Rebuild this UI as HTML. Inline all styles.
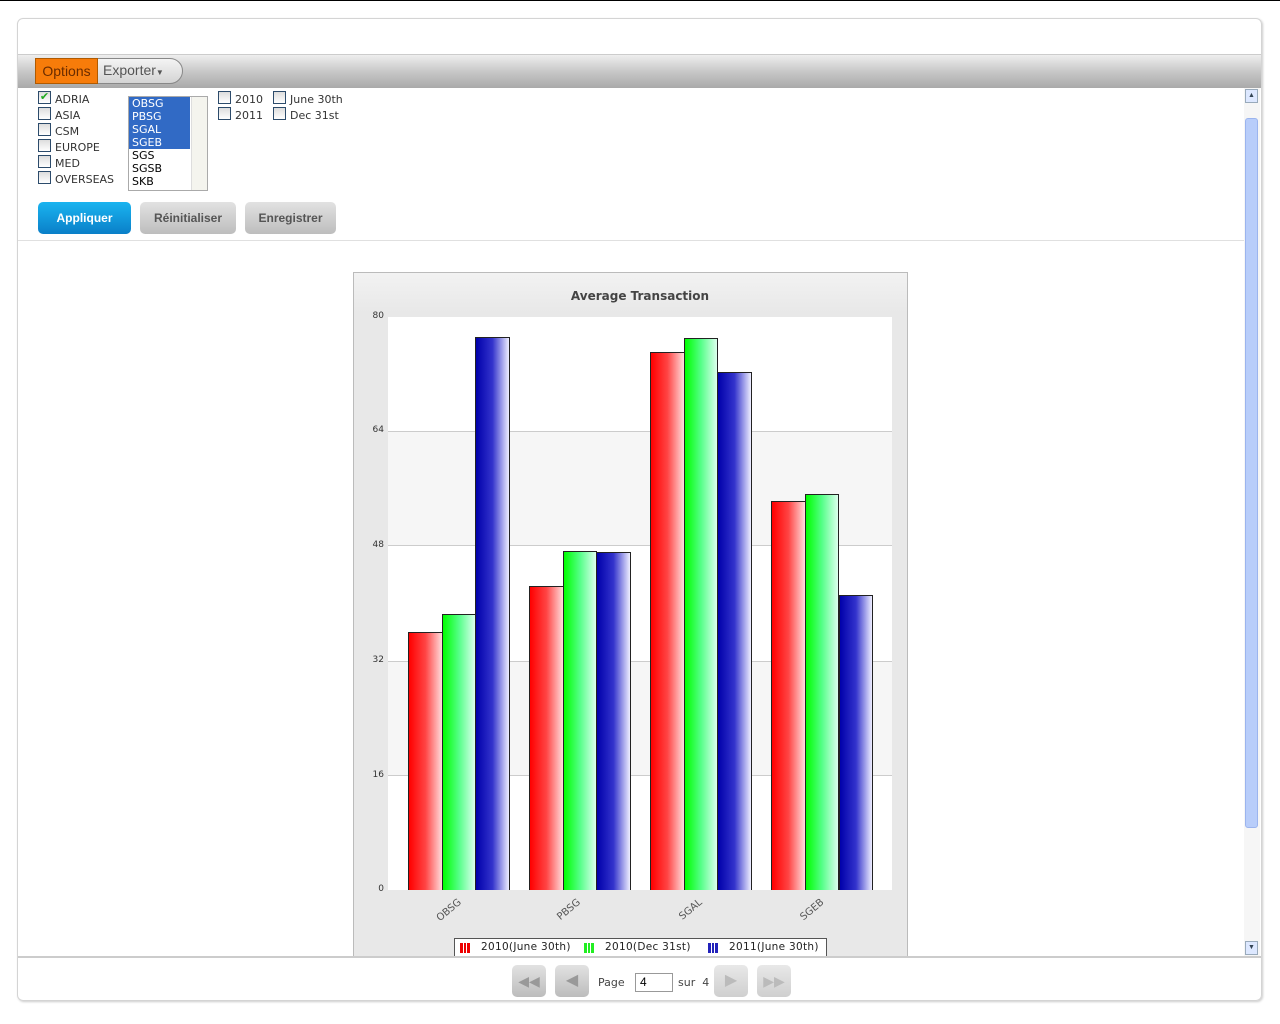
<!DOCTYPE html>
<html><head><style>
*{box-sizing:border-box}
body{margin:0;width:1280px;height:1024px;background:#fff;font-family:"Liberation Sans",sans-serif;position:relative;overflow:hidden}
.abs{position:absolute}
.frame{left:17px;top:18px;width:1245px;height:983px;border:1px solid #d4d4d4;border-radius:6px;box-shadow:1px 1px 2px #ccc}
.tb{left:18px;top:54px;width:1243px;height:34px;background:linear-gradient(#eee,#c8c8c8 50%,#a9a9a9);border-top:1px solid #ccc}
.cb{width:13px;height:13px;border:1px solid #2c4b6b;background:linear-gradient(#ddd,#fff)}
.lbl{font-family:"DejaVu Sans",sans-serif;font-size:11px;color:#333}
.btn{height:32px;border-radius:5px;font-size:12px;font-weight:bold;text-align:center;line-height:32px}
.g{background:linear-gradient(#e2e2e2,#bdbdbd);color:#555}
.bar{position:absolute;border:1px solid #222;border-bottom:none}
.r{background:linear-gradient(90deg,#f00,#f44 50%,#fdd)}
.gr{background:linear-gradient(90deg,#0f0,#5f8 50%,#dfe)}
.b{background:linear-gradient(90deg,#00a,#33c 50%,#eef)}
.yt{font-family:"DejaVu Sans",sans-serif;font-size:9px;color:#333;width:30px;text-align:right;left:354px}
.xt{font-family:"DejaVu Sans",sans-serif;font-size:9px;color:#555;transform:rotate(-40deg);transform-origin:right top}
.pb{width:34px;height:32px;border-radius:5px;background:linear-gradient(#e2e2e2,#bcbcbc);top:965px}
</style></head><body>
<div class="abs" style="left:0;top:0;width:1280px;height:1px;background:#000"></div>
<div class="abs frame"></div>
<div class="abs tb"></div>
<div class="abs" style="left:35px;top:58px;width:148px;height:26px;border:1px solid #888;border-radius:0 13px 13px 0;background:linear-gradient(#f4f4f4,#d4d4d4)"></div>
<div class="abs" style="left:35px;top:58px;width:63px;height:26px;background:#f77c0a;border:1px solid #b05a00;color:#6a2c00;font-size:14px;line-height:24px;text-align:center">Options</div>
<div class="abs" style="left:103px;top:62px;font-size:14px;color:#555">Exporter<span style="font-size:8px">▼</span></div>

<div class="abs cb" style="left:38px;top:91px;color:#2a2;font-size:11px;line-height:10px;text-align:center">✔</div>
<div class="abs cb" style="left:38px;top:107px"></div>
<div class="abs cb" style="left:38px;top:123px"></div>
<div class="abs cb" style="left:38px;top:139px"></div>
<div class="abs cb" style="left:38px;top:155px"></div>
<div class="abs cb" style="left:38px;top:171px"></div>
<div class="abs lbl" style="left:55px;top:92px;line-height:16px">ADRIA<br>ASIA<br>CSM<br>EUROPE<br>MED<br>OVERSEAS</div>

<div class="abs" style="left:128px;top:96px;width:80px;height:95px;border:1px solid #aaa;background:#fff"></div>
<div class="abs" style="left:129px;top:97px;width:61px;height:52px;background:#316ac5"></div>
<div class="abs" style="left:132px;top:97px;font-family:'DejaVu Sans',sans-serif;font-size:11px;line-height:13px;color:#000"><span style="color:#fff">OBSG<br>PBSG<br>SGAL<br>SGEB</span><br>SGS<br>SGSB<br>SKB</div>
<div class="abs" style="left:191px;top:97px;width:16px;height:93px;background:#f4f4ee;border-left:1px solid #ddd"></div>

<div class="abs cb" style="left:218px;top:91px"></div>
<div class="abs cb" style="left:218px;top:107px"></div>
<div class="abs cb" style="left:273px;top:91px"></div>
<div class="abs cb" style="left:273px;top:107px"></div>
<div class="abs lbl" style="left:235px;top:92px;line-height:16px">2010<br>2011</div>
<div class="abs lbl" style="left:290px;top:92px;line-height:16px">June 30th<br>Dec 31st</div>

<div class="abs btn" style="left:38px;top:202px;width:93px;background:linear-gradient(#1ab4f0,#0a7fc8);color:#fff">Appliquer</div>
<div class="abs btn g" style="left:140px;top:202px;width:96px">Réinitialiser</div>
<div class="abs btn g" style="left:245px;top:202px;width:91px">Enregistrer</div>
<div class="abs" style="left:18px;top:240px;width:1226px;height:1px;background:#e0e0e0"></div>

<div class="abs" style="left:1244px;top:88px;width:16px;height:868px;background:#f6f6f6"></div>
<div class="abs" style="left:1245px;top:89px;width:13px;height:14px;background:#dde8ff;border:1px solid #9ab;font-size:7px;line-height:12px;text-align:center;color:#345">▲</div>
<div class="abs" style="left:1245px;top:941px;width:13px;height:14px;background:#dde8ff;border:1px solid #9ab;font-size:7px;line-height:12px;text-align:center;color:#345">▼</div>
<div class="abs" style="left:1245px;top:118px;width:13px;height:710px;background:#b8cdfa;border:1px solid #9bb4ee;border-radius:3px"></div>

<div class="abs" style="left:353px;top:272px;width:555px;height:685px;background:#e8e8e8;border:1px solid #bbb;border-bottom:none"></div>
<div class="abs" style="left:354px;top:273px;width:553px;height:40px;background:linear-gradient(#f2f2f2,#e8e8e8)"></div>
<div class="abs" style="left:354px;top:289px;width:572px;text-align:center;font-family:'DejaVu Sans',sans-serif;font-size:12px;font-weight:bold;color:#444">Average Transaction</div>
<div class="abs" style="left:388px;top:317px;width:504px;height:573px;background:#fff"></div>
<div class="abs" style="left:388px;top:431px;width:504px;height:115px;background:#f6f6f6;border-top:1px solid #ccc;border-bottom:1px solid #ccc"></div>
<div class="abs" style="left:388px;top:661px;width:504px;height:115px;background:#f6f6f6;border-top:1px solid #ccc;border-bottom:1px solid #ccc"></div>
<div class="abs yt" style="top:311px">80</div>
<div class="abs yt" style="top:425px">64</div>
<div class="abs yt" style="top:540px">48</div>
<div class="abs yt" style="top:655px">32</div>
<div class="abs yt" style="top:770px">16</div>
<div class="abs yt" style="top:884px">0</div>

<div class="bar r" style="left:408px;top:632px;width:35px;height:258px"></div>
<div class="bar gr" style="left:442px;top:614px;width:34px;height:276px"></div>
<div class="bar b" style="left:475px;top:337px;width:35px;height:553px"></div>
<div class="bar r" style="left:529px;top:586px;width:35px;height:304px"></div>
<div class="bar gr" style="left:563px;top:551px;width:34px;height:339px"></div>
<div class="bar b" style="left:596px;top:552px;width:35px;height:338px"></div>
<div class="bar r" style="left:650px;top:352px;width:35px;height:538px"></div>
<div class="bar gr" style="left:684px;top:338px;width:34px;height:552px"></div>
<div class="bar b" style="left:717px;top:372px;width:35px;height:518px"></div>
<div class="bar r" style="left:771px;top:501px;width:35px;height:389px"></div>
<div class="bar gr" style="left:805px;top:494px;width:34px;height:396px"></div>
<div class="bar b" style="left:839px;top:595px;width:34px;height:295px"></div>

<div class="abs xt" style="left:428px;top:897px;font-size:10px">OBSG</div>
<div class="abs xt" style="left:549px;top:897px;font-size:10px">PBSG</div>
<div class="abs xt" style="left:671px;top:897px;font-size:10px">SGAL</div>
<div class="abs xt" style="left:792px;top:897px;font-size:10px">SGEB</div>

<div class="abs" style="left:454px;top:938px;width:373px;height:19px;background:#fff;border:1px solid #555;border-bottom:none;font-family:'DejaVu Sans',sans-serif;font-size:10.5px;color:#222;line-height:16px;letter-spacing:0.3px">
<span class="abs" style="left:5px;top:4px;width:10px;height:10px;background:linear-gradient(90deg,#e00 0 3px,transparent 3px 4px,#e00 4px 6px,transparent 6px 7px,#e00 7px)"></span>
<span class="abs" style="left:26px">2010(June 30th)</span>
<span class="abs" style="left:129px;top:4px;width:10px;height:10px;background:linear-gradient(90deg,#2e2 0 3px,transparent 3px 4px,#2e2 4px 6px,transparent 6px 7px,#2e2 7px)"></span>
<span class="abs" style="left:150px">2010(Dec 31st)</span>
<span class="abs" style="left:253px;top:4px;width:10px;height:10px;background:linear-gradient(90deg,#22b 0 3px,transparent 3px 4px,#22b 4px 6px,transparent 6px 7px,#22b 7px)"></span>
<span class="abs" style="left:274px">2011(June 30th)</span>
</div>

<div class="abs" style="left:18px;top:956px;width:1243px;height:2px;background:#ccc"></div>
<div class="abs pb" style="left:512px;color:#999;text-align:center;line-height:32px;font-size:14px">◀◀</div>
<div class="abs pb" style="left:555px;color:#999;text-align:center;line-height:32px;font-size:16px">◀</div>
<div class="abs" style="left:598px;top:976px;font-family:'DejaVu Sans',sans-serif;font-size:11px;color:#444">Page</div>
<div class="abs" style="left:635px;top:973px;width:38px;height:19px;border:1px solid #999;background:#fff;font-size:12px;padding-left:4px;line-height:17px">4</div>
<div class="abs" style="left:678px;top:976px;font-family:'DejaVu Sans',sans-serif;font-size:11px;color:#444">sur &nbsp;4</div>
<div class="abs pb" style="left:714px;background:linear-gradient(#e8e8e8,#cfcfcf);color:#bbb;text-align:center;line-height:32px;font-size:16px">▶</div>
<div class="abs pb" style="left:757px;background:linear-gradient(#e8e8e8,#cfcfcf);color:#bbb;text-align:center;line-height:32px;font-size:14px">▶▶</div>
</body></html>
